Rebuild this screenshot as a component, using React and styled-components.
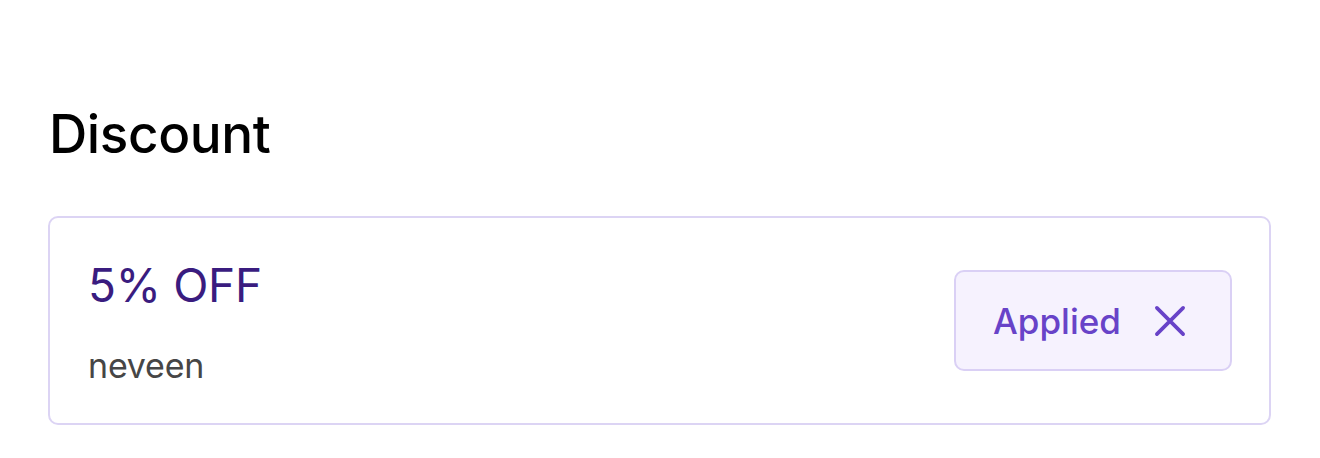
import React from "react";
import styled, { createGlobalStyle } from "styled-components";

const GlobalStyle = createGlobalStyle`
  body {
    margin: 0;
    background: #fff;
    font-family: Inter, "Noto Sans", sans-serif;
  }
`;

const Page = styled.div`
  padding: 101px 49px 0 48px;
`;

const Title = styled.h2`
  margin: 0 0 49px 1px;
  font-size: 53px;
  line-height: 66px;
  font-weight: 500;
  color: #000;
  letter-spacing: -0.4px;
`;

const Card = styled.div`
  box-sizing: border-box;
  height: 209px;
  border: 2px solid #dcd4f4;
  border-radius: 10px;
  display: flex;
  align-items: center;
  justify-content: space-between;
  padding: 0 37px 0 38px;
`;

const Info = styled.div`
  display: flex;
  flex-direction: column;
  gap: 35px;
  padding-top: 3px;
`;

const Offer = styled.div`
  font-size: 46px;
  line-height: 52px;
  color: #3a1c7f;
  letter-spacing: -0.3px;
`;

const Code = styled.div`
  font-size: 34px;
  line-height: 40px;
  color: #464646;
  letter-spacing: -0.2px;
`;

const AppliedButton = styled.button`
  box-sizing: border-box;
  width: 278px;
  height: 101px;
  display: flex;
  align-items: center;
  gap: 28px;
  padding: 0 0 0 37px;
  background: #f6f2fe;
  border: 2px solid #dad0f5;
  border-radius: 10px;
  color: #6843c8;
  font-family: Inter, "Noto Sans", sans-serif;
  font-size: 35px;
  font-weight: 500;
  cursor: pointer;
`;

const CloseIcon = () => (
  <svg width="42" height="42" viewBox="0 0 24 24" fill="none" stroke="#6843c8" strokeWidth="2.1" strokeLinecap="round">
    <path d="M4.5 4.5l15 15M19.5 4.5l-15 15" />
  </svg>
);

export default function App() {
  return (
    <>
      <GlobalStyle />
      <Page>
        <Title>Discount</Title>
        <Card>
          <Info>
            <Offer>5% OFF</Offer>
            <Code>neveen</Code>
          </Info>
          <AppliedButton>
            Applied
            <CloseIcon />
          </AppliedButton>
        </Card>
      </Page>
    </>
  );
}
